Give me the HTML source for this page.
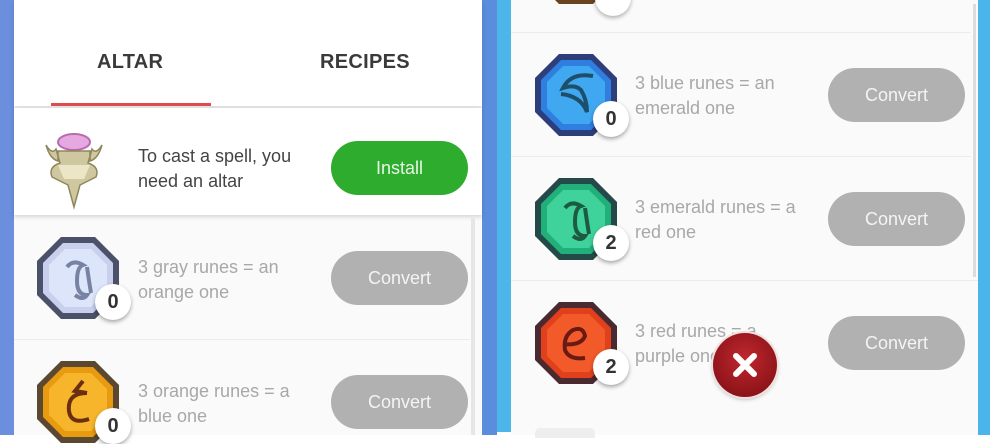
<!DOCTYPE html>
<html><head><meta charset="utf-8"><style>
*{margin:0;padding:0;box-sizing:border-box}
body{width:990px;height:435px;overflow:hidden;position:relative;background:#fff;font-family:"Liberation Sans",Roboto,sans-serif}
.a{position:absolute}
.txt{position:absolute;font-size:18px;color:#a8a8a8;line-height:25px}
.btn{position:absolute;width:137px;height:54px;border-radius:27px;background:#b1b1b1;color:#f4f4f4;font-size:18px;text-align:center;line-height:54px}
.sep{position:absolute;height:1px;background:#ececec}
.badge{position:absolute;width:36px;height:36px;border-radius:50%;background:#fff;box-shadow:0 2px 4px rgba(0,0,0,.35);font-size:20px;font-weight:bold;color:#333;text-align:center;line-height:36px}
.tab{position:absolute;font-size:20px;font-weight:bold;color:#3a3a3a;letter-spacing:0.3px}
</style></head><body>
<div class="a" style="left:0;top:0;width:14px;height:435px;background:#6b8fdc"></div>
<div class="a" style="left:482px;top:0;width:15px;height:435px;background:#5a8edc"></div>
<div class="a" style="left:497px;top:0;width:14px;height:432px;background:#4cb6ea"></div>
<div class="a" style="left:978px;top:0;width:12px;height:435px;background:#4bb4ea"></div>

<!-- LEFT PANEL -->
<div class="a" style="left:14px;top:0;width:468px;height:435px;background:#fafafa"></div>
<div class="a" style="left:14px;top:0;width:468px;height:106px;background:#fff;box-shadow:0 3px 5px rgba(0,0,0,.12)"></div>
<div class="tab" style="left:97px;top:51px">ALTAR</div>
<div class="tab" style="left:320px;top:51px">RECIPES</div>
<div class="a" style="left:51px;top:103px;width:160px;height:3px;background:#e14a4a"></div>
<div class="a" style="left:14px;top:108px;width:468px;height:107px;background:#fff;box-shadow:0 2px 4px rgba(0,0,0,.15)"></div>
<svg class="a" style="left:38px;top:125px" width="72" height="85" viewBox="0 0 72 85">
<ellipse cx="36" cy="17" rx="16" ry="8" fill="#e6a8e0" stroke="#b86bb0" stroke-width="2"/>
<path d="M8 20 Q14 30 18 24 L22 38 Q10 42 14 52 L30 60 L36 82 L42 60 L58 52 Q62 42 50 38 L54 24 Q58 30 64 20 Q60 34 52 36 L52 26 L20 26 L20 36 Q12 34 8 20Z" fill="#cfc7a0" stroke="#8f865c" stroke-width="1.5"/>
<path d="M20 40 L52 40 L46 54 L26 54Z" fill="#ece6c6"/>
</svg>
<div class="txt" style="left:138px;top:144px;color:#444">To cast a spell, you<br>need an altar</div>
<div class="btn" style="left:331px;top:141px;background:#2eac2e;color:#e8f6e8">Install</div>

<div class="sep" style="left:14px;top:339px;width:456px"></div>
<div class="a" style="left:471px;top:218px;width:4px;height:217px;background:#e6e6e6"></div>

<svg class="a" style="left:37px;top:237px" width="82" height="82" viewBox="0 0 82 82">
<polygon points="24,0 58,0 82,24 82,58 58,82 24,82 0,58 0,24" fill="#4a5168"/>
<polygon points="26,6 56,6 76,26 76,56 56,76 26,76 6,56 6,26" fill="#c9d0ee"/>
<polygon points="28,12 54,12 70,28 70,54 54,70 28,70 12,54 12,28" fill="#dde5fb"/>
<path d="M30 30 Q36 22 46 28 Q40 30 40 44 Q40 58 50 58 Q46 64 38 58 M50 30 Q52 44 54 56" stroke="#7883a4" stroke-width="4" fill="none"/>
</svg>
<div class="badge" style="left:95px;top:284px">0</div>
<div class="txt" style="left:138px;top:255px">3 gray runes = an<br>orange one</div>
<div class="btn" style="left:331px;top:251px">Convert</div>

<svg class="a" style="left:37px;top:361px" width="82" height="82" viewBox="0 0 82 82">
<polygon points="24,0 58,0 82,24 82,58 58,82 24,82 0,58 0,24" fill="#5a4830"/>
<polygon points="26,6 56,6 76,26 76,56 56,76 26,76 6,56 6,26" fill="#e89a10"/>
<polygon points="28,12 54,12 70,28 70,54 54,70 28,70 12,54 12,28" fill="#f6b52a"/>
<path d="M46 20 L38 30 L50 32 M50 32 Q30 32 32 50 Q34 64 52 58" stroke="#6a2f10" stroke-width="4" fill="none"/>
</svg>
<div class="badge" style="left:95px;top:408px">0</div>
<div class="txt" style="left:138px;top:379px">3 orange runes = a<br>blue one</div>
<div class="btn" style="left:331px;top:375px">Convert</div>

<!-- RIGHT PANEL -->
<div class="a" style="left:511px;top:0;width:467px;height:435px;background:#fafafa"></div>
<div class="a" style="left:973px;top:4px;width:3px;height:273px;background:#dcdcdc"></div>
<svg class="a" style="left:535px;top:-10px" width="82" height="20" viewBox="0 0 82 20"><polygon points="10,0 72,0 58,14 24,14" fill="#6a4320"/></svg>
<div class="a" style="left:595px;top:-20px;width:36px;height:36px;border-radius:50%;background:#fff;box-shadow:0 2px 4px rgba(0,0,0,.3)"></div>
<div class="sep" style="left:511px;top:32px;width:460px"></div>
<div class="sep" style="left:511px;top:156px;width:460px"></div>
<div class="sep" style="left:511px;top:280px;width:467px"></div>

<svg class="a" style="left:535px;top:54px" width="82" height="82" viewBox="0 0 82 82">
<polygon points="24,0 58,0 82,24 82,58 58,82 24,82 0,58 0,24" fill="#2d3e7a"/>
<polygon points="26,6 56,6 76,26 76,56 56,76 26,76 6,56 6,26" fill="#2e7fe0"/>
<polygon points="28,12 54,12 70,28 70,54 54,70 28,70 12,54 12,28" fill="#3fa8f0"/>
<path d="M58 22 Q36 18 28 34 Q40 30 46 36 Q52 46 52 58 Q46 42 26 40" stroke="#1e4f6a" stroke-width="4" fill="none"/>
</svg>
<div class="badge" style="left:593px;top:101px">0</div>
<div class="txt" style="left:635px;top:71px">3 blue runes = an<br>emerald one</div>
<div class="btn" style="left:828px;top:68px">Convert</div>

<svg class="a" style="left:535px;top:178px" width="82" height="82" viewBox="0 0 82 82">
<polygon points="24,0 58,0 82,24 82,58 58,82 24,82 0,58 0,24" fill="#234a48"/>
<polygon points="26,6 56,6 76,26 76,56 56,76 26,76 6,56 6,26" fill="#22b07a"/>
<polygon points="28,12 54,12 70,28 70,54 54,70 28,70 12,54 12,28" fill="#3fd29a"/>
<path d="M30 30 Q36 22 46 28 Q40 30 40 44 Q40 58 50 58 Q46 64 38 58 M50 30 Q52 44 54 56" stroke="#1c5a44" stroke-width="4" fill="none"/>
</svg>
<div class="badge" style="left:593px;top:225px">2</div>
<div class="txt" style="left:635px;top:195px">3 emerald runes = a<br>red one</div>
<div class="btn" style="left:828px;top:192px">Convert</div>

<svg class="a" style="left:535px;top:302px" width="82" height="82" viewBox="0 0 82 82">
<polygon points="24,0 58,0 82,24 82,58 58,82 24,82 0,58 0,24" fill="#4a2a30"/>
<polygon points="26,6 56,6 76,26 76,56 56,76 26,76 6,56 6,26" fill="#e0401c"/>
<polygon points="28,12 54,12 70,28 70,54 54,70 28,70 12,54 12,28" fill="#f25a2a"/>
<path d="M28 42 Q46 44 50 34 Q48 24 38 28 Q28 34 30 48 Q34 58 50 56" stroke="#6a1a14" stroke-width="4" fill="none"/>
</svg>
<div class="badge" style="left:593px;top:349px">2</div>
<div class="txt" style="left:635px;top:319px">3 red runes = a<br>purple one</div>
<div class="btn" style="left:828px;top:316px">Convert</div>

<div class="a" style="left:713px;top:333px;width:64px;height:64px;border-radius:50%;background:radial-gradient(circle at 50% 40%,#c0282e,#7a0c12);box-shadow:0 0 0 2px #f0e0e0,0 2px 5px rgba(0,0,0,.3)"></div>
<svg class="a" style="left:730px;top:350px" width="30" height="30" viewBox="0 0 30 30"><path d="M6 6 L24 24 M24 6 L6 24" stroke="#fff" stroke-width="6" stroke-linecap="round"/></svg>
<div class="a" style="left:535px;top:428px;width:60px;height:10px;border-radius:5px 5px 0 0;background:#eee"></div>
</body></html>
